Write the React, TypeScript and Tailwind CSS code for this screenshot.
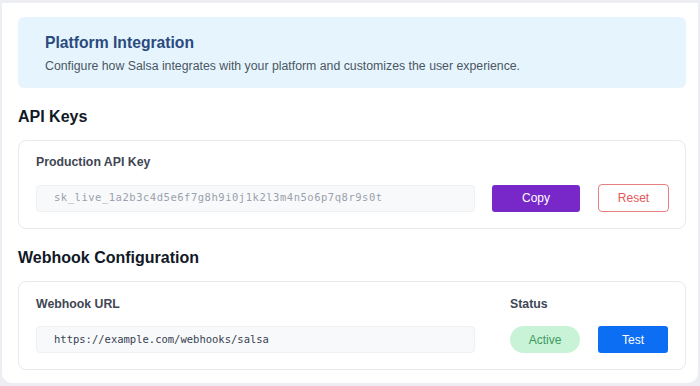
export default function App() {
  return (
    <div className="h-[386px] w-[700px] overflow-hidden bg-[#eceef4] pt-[3px] pl-[2px] pr-[2px] font-['Liberation_Sans',Arial,sans-serif]">
      <div className="h-[380px] rounded-b-[10px] bg-white pl-4 pr-[12px] pt-[14px]">
        <div className="h-[71px] rounded-[6px] bg-[#e6f5fd] px-[27px] pt-[16px]">
          <h1 className="text-[15.7px] font-bold leading-[20px] text-[#2b4a7e]">
            Platform Integration
          </h1>
          <p className="mt-[5px] text-[12.3px] leading-[16px] text-[#4b5563]">
            Configure how Salsa integrates with your platform and customizes the user experience.
          </p>
        </div>

        <h2 className="mt-[18px] text-[16px] font-bold leading-[22px] text-[#111827]">
          API Keys
        </h2>
        <div className="mt-[12px] h-[89px] rounded-[8px] border border-[#e7e9ed] px-[17px] pt-[13px]">
          <div className="text-[12.3px] font-bold leading-[16px] text-[#3f4654]">
            Production API Key
          </div>
          <div className="mt-[14px] flex items-center">
            <div className="flex h-[27px] w-[439px] shrink-0 items-center rounded-[4px] border border-[#eef0f3] bg-[#f8f9fb] pl-[17px] font-['DejaVu_Sans_Mono',monospace] text-[10.5px] tracking-wider text-[#9aa1ab]">
              sk_live_1a2b3c4d5e6f7g8h9i0j1k2l3m4n5o6p7q8r9s0t
            </div>
            <button className="ml-[17px] h-[27px] w-[88px] shrink-0 rounded-[3px] bg-[#7828c8] text-[12px] text-white">
              Copy
            </button>
            <button className="ml-[18px] h-[28px] w-[71px] shrink-0 rounded-[4px] border border-[#e58080] bg-white text-[12px] text-[#e05a5a]">
              Reset
            </button>
          </div>
        </div>

        <h2 className="mt-[18px] text-[16px] font-bold leading-[22px] text-[#111827]">
          Webhook Configuration
        </h2>
        <div className="mt-[12px] h-[89px] rounded-[8px] border border-[#e7e9ed] px-[17px] pt-[14px]">
          <div className="flex text-[12.3px] font-bold leading-[16px] text-[#3f4654]">
            <span className="w-[474px]">Webhook URL</span>
            <span>Status</span>
          </div>
          <div className="mt-[14px] flex items-center">
            <div className="flex h-[27px] w-[439px] shrink-0 items-center rounded-[4px] border border-[#eef0f3] bg-[#f8f9fb] pl-[17px] font-['DejaVu_Sans_Mono',monospace] text-[10.5px] text-[#374151]">
              https://example.com/webhooks/salsa
            </div>
            <span className="ml-[35px] flex h-[27px] w-[70px] shrink-0 items-center justify-center rounded-full bg-[#c8f3d7] text-[12px] text-[#3d9a61]">
              Active
            </span>
            <button className="ml-[18px] h-[27px] w-[70px] shrink-0 rounded-[3px] bg-[#0b6ef3] text-[12px] text-white">
              Test
            </button>
          </div>
        </div>
      </div>
    </div>
  );
}
